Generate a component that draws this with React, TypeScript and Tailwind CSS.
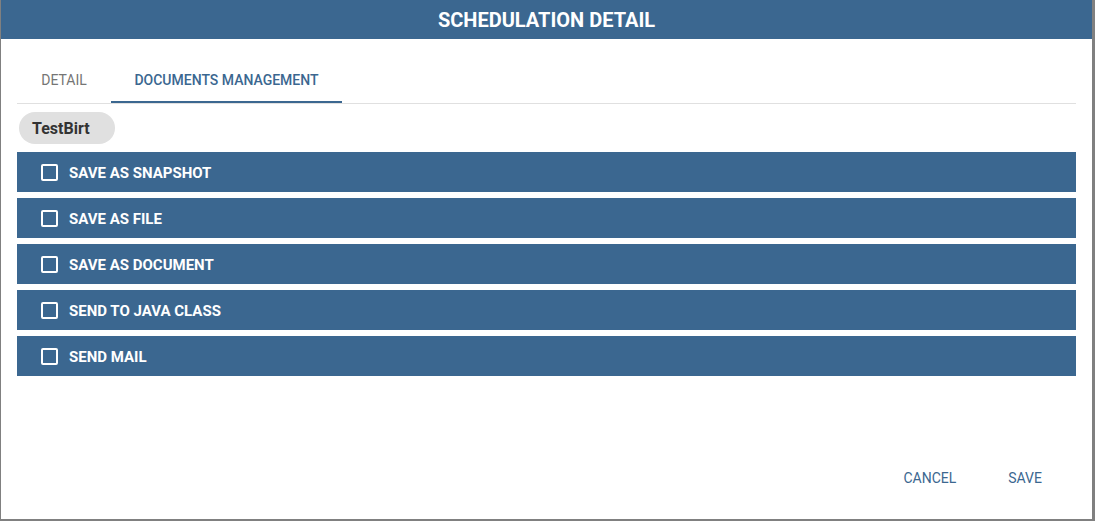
import React from 'react';

const options = ['SAVE AS SNAPSHOT', 'SAVE AS FILE', 'SAVE AS DOCUMENT', 'SEND TO JAVA CLASS', 'SEND MAIL'];

const App: React.FC = () => {
    return (
        <div className="h-[521px] w-[1095px] bg-[#808080] pl-px pr-[3px] pb-[2px]" style={{ fontFamily: 'Roboto, "Liberation Sans", sans-serif' }}>
            <div className="flex h-full flex-col bg-white">
                {/* Titolo */}
                <div className="flex h-[39px] shrink-0 items-center justify-center bg-[#3b6790]">
                    <h1 className="text-[20px] font-bold text-white">SCHEDULATION DETAIL</h1>
                </div>

                <div className="flex flex-1 flex-col px-4 pt-[24px]">
                    {/* Tabs */}
                    <div className="flex h-[41px] border-b border-[#e0e0e0]">
                        <div className="flex w-[94px] justify-center pt-[7px] text-[14px] text-[#757575]">DETAIL</div>
                        <div className="flex w-[231px] justify-center border-b-2 border-[#3b6790] pt-[7px] text-[14px] font-medium text-[#3b6790]">
                            DOCUMENTS MANAGEMENT
                        </div>
                    </div>

                    <div className="mt-2 flex">
                        <span className="ml-[2px] flex h-[32px] w-[96px] items-center rounded-full bg-[#e0e0e0] pl-[13px] pt-[2px] text-[16px] font-bold text-[#333333]">
                            TestBirt
                        </span>
                    </div>

                    {/* Opzioni */}
                    <div className="mt-2 flex flex-col gap-[6px]">
                        {options.map((label) => (
                            <div key={label} className="flex h-[40px] items-center bg-[#3b6790] pl-[24px]">
                                <span className="h-[17px] w-[17px] rounded-[2px] border-2 border-white" />
                                <span className="ml-[11px] pt-[2px] text-[15px] font-bold text-white">{label}</span>
                            </div>
                        ))}
                    </div>

                    <div className="mt-auto flex justify-end gap-[24px] pb-[22px] pr-[16px]">
                        <button className="px-[10px] py-[8px] text-[14px] text-[#3b6790]">CANCEL</button>
                        <button className="px-[18px] py-[8px] text-[14px] text-[#3b6790]">SAVE</button>
                    </div>
                </div>
            </div>
        </div>
    );
};

export default App;
